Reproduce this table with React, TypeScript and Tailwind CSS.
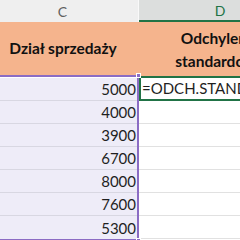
export default function App() {
  const values = [5000, 4000, 3900, 6700, 8000, 7600, 5300];

  return (
    <div className="w-[240px] h-[240px] overflow-hidden bg-white font-['Lato','Liberation_Sans',sans-serif]">
      <div className="flex w-[301px]">
        {/* Column C */}
        <div className="w-[139px] shrink-0 flex flex-col">
          <div className="h-[22px] bg-[#efefef] border-r border-[#f9f9f9] flex items-center justify-center pr-[13px] text-[14px] text-[#606060]">
            C
          </div>
          <div className="h-[53px] bg-[#f5b48d] flex items-center justify-center pr-[13px] text-[15.5px] font-bold text-[#111]">
            Dział sprzedaży
          </div>
          <div className="relative border-t-2 border-b-2 border-r-2 border-[#8b6cc4] bg-white pt-px">
            {values.map((v, i) => (
              <div
                key={v}
                className={`h-[23px] bg-[#eeecf8] flex items-end justify-end pr-[1px] pb-[2px] text-[15px] leading-[18px] text-[#1f1f1f] ${
                  i < values.length - 1 ? 'border-b border-[#d8d7e2]' : ''
                }`}
              >
                {v}
              </div>
            ))}
            <div className="absolute -top-[4px] -right-[4px] w-[5px] h-[5px] bg-[#8b6cc4] border border-white"></div>
            <div className="absolute -bottom-[4px] -right-[4px] w-[5px] h-[5px] bg-[#8b6cc4] border border-white"></div>
          </div>
        </div>

        {/* Column D */}
        <div className="w-[162px] shrink-0 flex flex-col">
          <div className="h-[22px] bg-[#dcdedd] border-b-2 border-[#217346] flex items-center justify-center text-[14px] text-[#217346]">
            D
          </div>
          <div className="h-[54px] bg-[#f5b48d] flex items-center justify-center text-center text-[15.5px] leading-[23px] font-bold text-[#111] pt-[2px]">
            Odchylenie
            <br />
            standardowe
          </div>
          <div className="h-[25px] border-2 border-[#217346] flex items-end pl-[1px] pb-[2px] text-[15px] leading-[18px] text-[#1f1f1f] whitespace-nowrap overflow-visible">
            =ODCH.STANDARDOWE(C2:C8)
          </div>
          {values.slice(1).map(v => (
            <div key={v} className="h-[23px] border-b border-[#e1e1e1]"></div>
          ))}
        </div>
      </div>
    </div>
  );
}
